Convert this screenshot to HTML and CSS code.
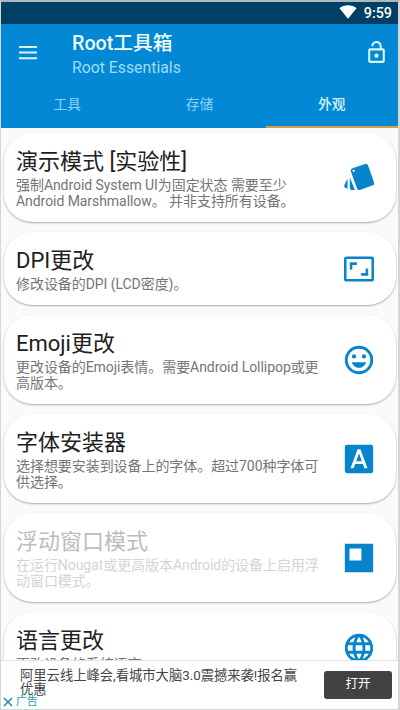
FILE: index.html
```html
<!DOCTYPE html>
<html lang="zh-CN">
<head>
<meta charset="utf-8">
<title>Root工具箱</title>
<link rel="stylesheet" href="styles.css">
</head>
<body>
<div class="screen">
  <div class="status">
    <svg class="wifi" viewBox="0 0 18 14"><path d="M0.5 3.2C5.5-.6 12.500-.6 17.500 3.200L9 13.800z"/></svg>
    <span class="clock">9:59</span>
  </div>
  <header class="appbar">
    <div class="toolbar">
      <svg class="menu" viewBox="0 0 18 14"><path d="M0 0h18v2H0zM0 5.600h18v2H0zM0 11.200h18v2H0z"/></svg>
      <div class="titles">
        <h1>Root工具箱</h1>
        <p>Root Essentials</p>
      </div>
      <svg class="lock" viewBox="0 0 24 24"><path d="M12 17c1.100 0 2-.9 2-2s-.9-2-2-2-2 .9-2 2 .9 2 2 2zm6-9h-1V6c0-2.760-2.240-5-5-5S7 3.240 7 6h1.900c0-1.710 1.390-3.100 3.100-3.100s3.100 1.390 3.100 3.100v2H6c-1.100 0-2 .9-2 2v10c0 1.100.9 2 2 2h12c1.100 0 2-.9 2-2V10c0-1.100-.9-2-2-2zm0 12H6V10h12v10z"/></svg>
    </div>
    <nav class="tabs">
      <span class="tab">工具</span>
      <span class="tab">存储</span>
      <span class="tab active">外观</span>
    </nav>
  </header>
  <main class="list">
    <section class="card">
      <div class="text">
        <h2>演示模式 [实验性]</h2>
        <p>强制Android System UI为固定状态 需要至少<br>Android Marshmallow。 并非支持所有设备。</p>
      </div>
      <svg class="icon" viewBox="0 0 24 24"><path fill-rule="evenodd" d="M7.300 5.200L16.300 2.100Q17.800 1.700 18.400 3.100L22.700 15.300Q23.100 16.700 21.800 17.200L12.600 20.400Q11.200 20.800 10.700 19.500L6.200 7.200Q5.800 5.800 7.300 5.200zM8.200 6.100a.8.8 0 1 0 0 1.600.8.8 0 0 0 0-1.600z"/><path d="M3.900 12.300v7.200l-1.800-.8q-.9-.5-.5-1.500zM5.500 11.500l3.600 9H7.500q-2 0-2-2z"/></svg>
    </section>
    <section class="card short">
      <div class="text">
        <h2>DPI更改</h2>
        <p>修改设备的DPI (LCD密度)。</p>
      </div>
      <svg class="icon" viewBox="0 0 24 24"><path fill-rule="evenodd" d="M3.200 3.200h17.600a1.800 1.800 0 0 1 1.800 1.800v14a1.800 1.800 0 0 1-1.800 1.800H3.200A1.800 1.800 0 0 1 1.400 19V5a1.800 1.800 0 0 1 1.800-1.800zm0 1.800v14h17.600V5z"/><path d="M5.500 7.300h5v1.800H7.300v3.200H5.500zM18.500 16.700h-5v-1.800h3.200v-3.200h1.800z"/></svg>
    </section>
    <section class="card">
      <div class="text">
        <h2>Emoji更改</h2>
        <p>更改设备的Emoji表情。需要Android Lollipop或更<br>高版本。</p>
      </div>
      <svg class="icon" viewBox="0 0 24 24"><path fill-rule="evenodd" d="M12 2a10 10 0 1 0 0 20 10 10 0 0 0 0-20zm0 2a8 8 0 1 1 0 16 8 8 0 0 1 0-16z"/><circle cx="8.500" cy="9.500" r="1.500"/><circle cx="15.500" cy="9.500" r="1.500"/><path d="M6.900 13.500h10.200c-.8 2.350-2.770 4-5.100 4s-4.300-1.650-5.100-4z"/></svg>
    </section>
    <section class="card">
      <div class="text">
        <h2>字体安装器</h2>
        <p>选择想要安装到设备上的字体。超过700种字体可<br>供选择。</p>
      </div>
      <svg class="icon" viewBox="0 0 24 24"><path fill-rule="evenodd" d="M3.500 2h17A1.500 1.500 0 0 1 22 3.500v17a1.500 1.500 0 0 1-1.500 1.500h-17A1.500 1.500 0 0 1 2 20.500v-17A1.500 1.500 0 0 1 3.500 2zM11 5.200L6 18.500h2.200l1.100-3h5.400l1.100 3H18L13 5.200zm-1 8.300l2-5.500 2 5.500z"/></svg>
    </section>
    <section class="card disabled">
      <div class="text">
        <h2>浮动窗口模式</h2>
        <p>在运行Nougat或更高版本Android的设备上启用浮<br>动窗口模式。</p>
      </div>
      <svg class="icon" viewBox="0 0 24 24"><path fill-rule="evenodd" d="M2 2h20v20H2zM5.300 5.300v8.400h8.400V5.300z"/></svg>
    </section>
    <section class="card">
      <div class="text">
        <h2>语言更改</h2>
        <p>更改设备的系统语言。</p>
      </div>
      <svg class="icon globe" viewBox="0 0 24 24"><path d="M11.990 2C6.470 2 2 6.480 2 12s4.470 10 9.990 10C17.520 22 22 17.520 22 12S17.520 2 11.990 2zm6.930 6h-2.950c-.32-1.250-.78-2.450-1.380-3.560 1.840.63 3.370 1.910 4.330 3.560zM12 4.040c.83 1.200 1.480 2.530 1.910 3.960h-3.820c.43-1.430 1.080-2.760 1.910-3.960zM4.260 14C4.100 13.360 4 12.690 4 12s.1-1.360.26-2h3.380c-.08.66-.14 1.320-.14 2s.06 1.340.14 2H4.260zm.82 2h2.950c.32 1.250.78 2.450 1.380 3.560-1.840-.63-3.370-1.900-4.330-3.560zm2.950-8H5.080c.96-1.660 2.490-2.930 4.330-3.560C8.810 5.550 8.350 6.750 8.030 8zM12 19.960c-.83-1.200-1.480-2.530-1.910-3.960h3.820c-.43 1.430-1.080 2.760-1.910 3.960zM14.340 14H9.660c-.09-.66-.16-1.320-.16-2s.07-1.350.16-2h4.680c.09.65.16 1.320.16 2s-.07 1.340-.16 2zm.25 5.560c.6-1.110 1.060-2.310 1.380-3.560h2.950c-.96 1.650-2.490 2.930-4.330 3.560zM16.360 14c.08-.66.14-1.320.14-2s-.06-1.340-.14-2h3.380c.16.64.26 1.310.26 2s-.1 1.360-.26 2h-3.380z"/></svg>
    </section>
  </main>
  <footer class="ad">
    <div class="ad-body">
      <p class="ad-text">阿里云线上峰会,看城市大脑3.0震撼来袭!报名赢<br>优惠</p>
      <div class="ad-tag"><svg viewBox="0 0 10 10"><path d="M1 1l8 8M9 1L1 9"/></svg><span>广告</span></div>
    </div>
    <button class="open">打开</button>
  </footer>
</div>
</body>
</html>
```
FILE: styles.css
```css
* {
  box-sizing: border-box;
  margin: 0;
  padding: 0;
}

body {
  width: 400px;
  height: 710px;
  overflow: hidden;
  font-family: Roboto, "Noto Sans CJK SC", sans-serif;
}

.screen {
  display: flex;
  flex-direction: column;
  width: 400px;
  height: 710px;
  border: 1px solid #d4d6d8;
  border-top: 2px solid #aeb8be;
  border-right-width: 2px;
  background: #fafafa;
}

.status {
  flex: none;
  display: flex;
  justify-content: flex-end;
  align-items: center;
  gap: 7px;
  height: 22px;
  padding-right: 6px;
  background: #014064;
  color: #fff;
}

.wifi {
  width: 18px;
  height: 14px;
  margin-top: -2px;
  fill: #fff;
}

.clock {
  font-size: 14.300px;
  font-weight: 500;
  line-height: 20px;
}

.appbar {
  flex: none;
  height: 104px;
  background: #0388d6;
}

.toolbar {
  display: flex;
  align-items: flex-start;
  height: 56px;
  padding: 0 9px 0 18px;
}

.menu {
  width: 18px;
  height: 14px;
  margin-top: 22px;
  fill: #d9f5f5;
}

.titles {
  flex: 1;
  padding: 7px 0 0 35px;
  white-space: nowrap;
}

.titles h1 {
  font-size: 19.700px;
  font-weight: 500;
  line-height: 26px;
  color: #eefcfa;
}

.titles p {
  font-size: 15.800px;
  line-height: 22px;
  color: #9edcf5;
}

.lock {
  width: 25px;
  height: 25px;
  margin-top: 16px;
  fill: #d9f5f5;
}

.tabs {
  display: flex;
  height: 48px;
}

.tab {
  flex: 1;
  padding-bottom: 1px;
  border-bottom: 2px solid transparent;
  font-size: 13.700px;
  line-height: 49px;
  text-align: center;
  color: #8fd3f3;
}

.tab.active {
  border-color: #d3a343;
  font-weight: 500;
  color: #d9f5f5;
}

.list {
  flex: 1;
  display: flex;
  flex-direction: column;
  gap: 10px;
  min-height: 0;
  padding: 5px 2px 0 3px;
  overflow: hidden;
}

.card {
  flex: none;
  display: flex;
  align-items: center;
  height: 89px;
  padding: 0 20px 0 12px;
  border-radius: 28px;
  background: #fff;
  box-shadow: 0 1px 2px rgba(0, 0, 0, 0.32);
}

.card.short {
  height: 73px;
}

.text {
  flex: 1;
  align-self: flex-start;
  padding-top: 14px;
  white-space: nowrap;
}

.text h2 {
  font-size: 22px;
  font-weight: 400;
  line-height: 30px;
  color: #202020;
}

.text p {
  font-size: 14px;
  line-height: 16px;
  letter-spacing: -0.06px;
  color: #757575;
}

.disabled .text h2 {
  color: #bcbcbc;
}

.disabled .text p {
  color: #d4d4d4;
}

.icon {
  flex: none;
  width: 34px;
  height: 34px;
  fill: #0784cc;
}

.globe {
  align-self: flex-start;
  margin-top: 19px;
}

.ad {
  flex: none;
  display: flex;
  height: 49px;
  border-top: 1px solid #e2e2e2;
  background: #fff;
}

.ad-body {
  flex: 1;
  padding-top: 8px;
  white-space: nowrap;
}

.ad-text {
  padding-left: 19px;
  font-size: 13.300px;
  line-height: 14px;
  color: #454545;
}

.ad-tag {
  display: flex;
  align-items: center;
  gap: 3px;
  padding-left: 2px;
  font-size: 10.800px;
  line-height: 10px;
  color: #20a4b4;
}

.ad-tag svg {
  width: 10px;
  height: 10px;
  fill: none;
  stroke: #168a9c;
  stroke-width: 1.400;
}

.open {
  width: 68px;
  height: 28px;
  margin: 10px 6px 0 0;
  padding-bottom: 3px;
  border: 0;
  border-radius: 3px;
  background: #424242;
  font-family: inherit;
  font-size: 12.500px;
  line-height: 24px;
  color: #fff;
}
```
